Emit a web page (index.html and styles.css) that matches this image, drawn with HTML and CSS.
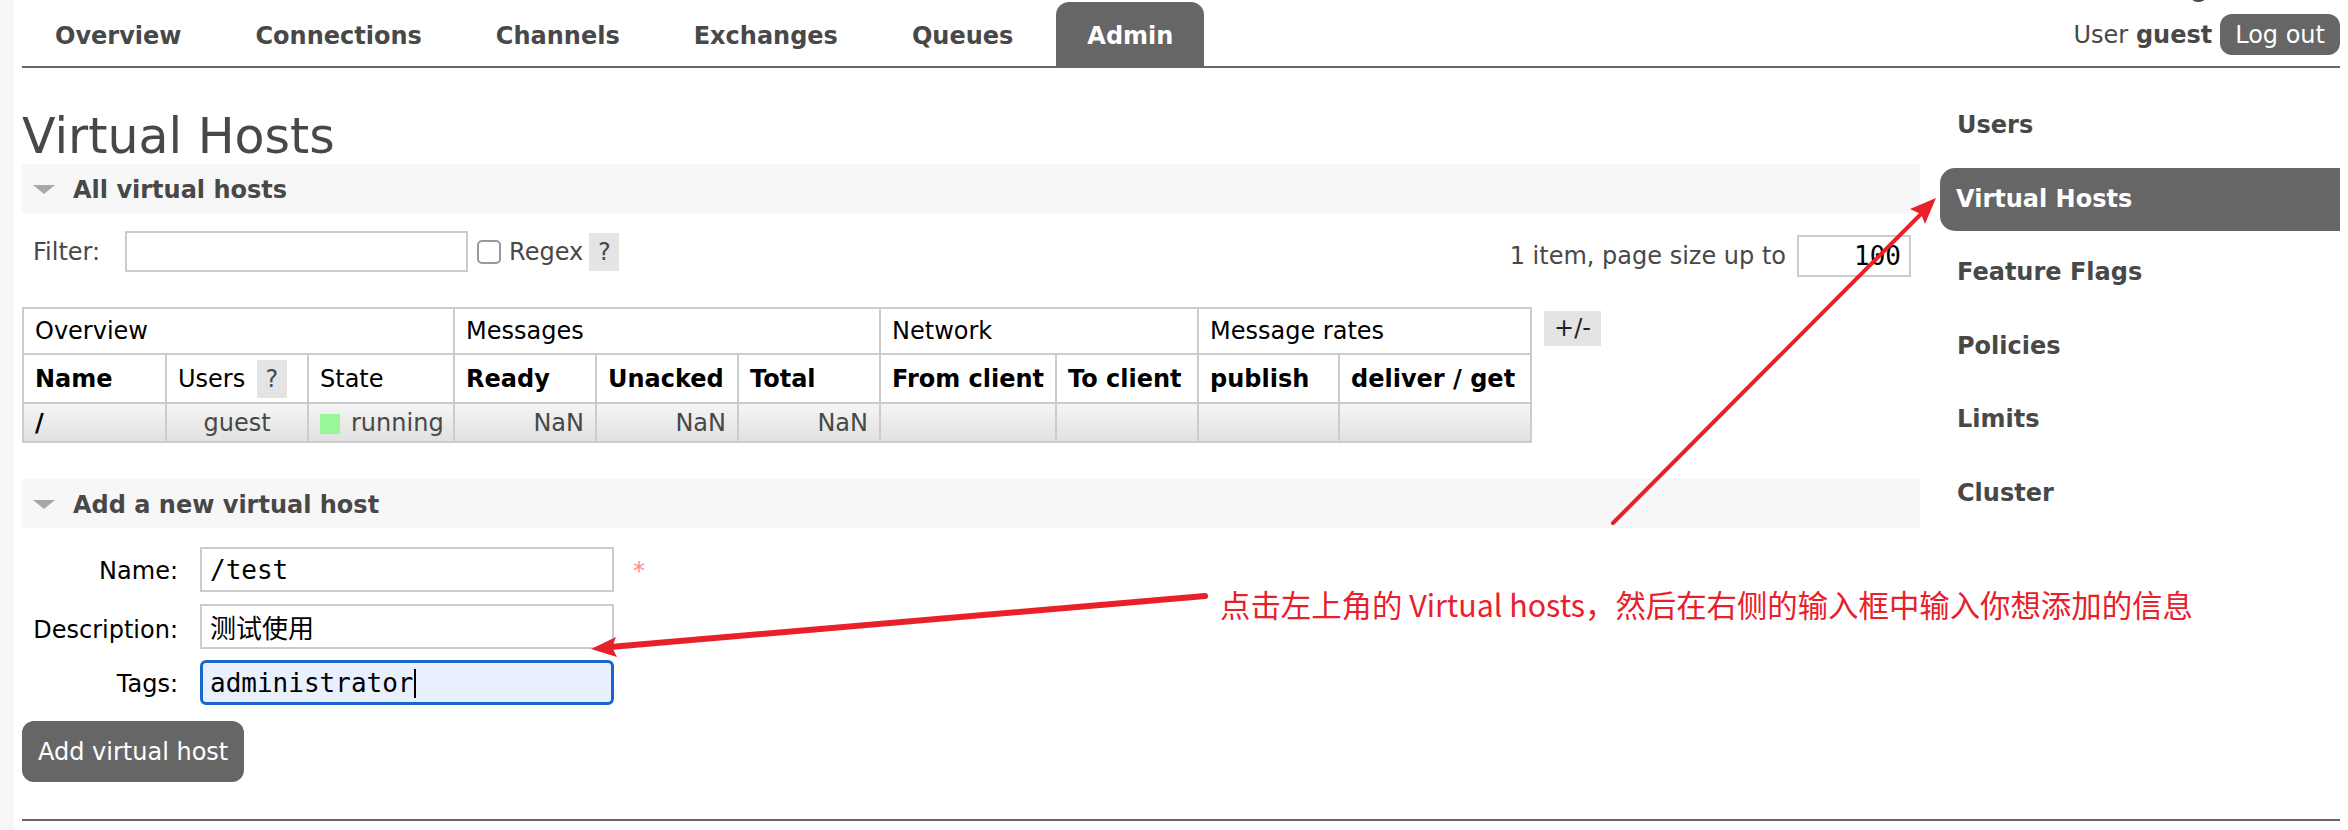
FILE: index.html
```html
<!DOCTYPE html>
<html lang="en">
<head>
<meta charset="utf-8">
<title>RabbitMQ Management: Virtual Hosts</title>
<link rel="stylesheet" href="styles.css">
</head>
<body>
<div class="page">
  <header class="header">
    <ul class="tabs">
      <li><a class="tab" href="#">Overview</a></li>
      <li><a class="tab" href="#">Connections</a></li>
      <li><a class="tab" href="#">Channels</a></li>
      <li><a class="tab" href="#">Exchanges</a></li>
      <li><a class="tab" href="#">Queues</a></li>
      <li><a class="tab active" href="#">Admin</a></li>
    </ul>
    <div class="login-wrap">
      <div class="cluster-line">Cluster <b>rabbit@localhost</b></div>
      <div class="login">
        <span>User <b>guest</b></span>
        <button class="logout" type="button">Log out</button>
      </div>
    </div>
  </header>

  <div class="layout">
    <main class="main">
      <h1 class="title">Virtual Hosts</h1>

      <section class="section">
        <h2 class="bar"><span class="tri"></span>All virtual hosts</h2>
        <div class="filter-row">
          <div class="filter-left">
            <label class="filter-label" for="filter">Filter:</label>
            <input class="text-input filter-input" id="filter" type="text">
            <input class="check" type="checkbox" id="regex">
            <label class="regex-label" for="regex">Regex</label>
            <span class="help">?</span>
          </div>
          <div class="filter-right">
            <span>1 item, page size up to</span>
            <input class="text-input page-size" type="text" value="100">
          </div>
        </div>

        <div class="tbl-wrap">
          <table class="list">
            <colgroup>
              <col class="w-name"><col class="w-users"><col class="w-state">
              <col class="w-num"><col class="w-num"><col class="w-num">
              <col class="w-from"><col class="w-num">
              <col class="w-pub"><col class="w-del">
            </colgroup>
            <thead>
              <tr class="r1">
                <th colspan="3">Overview</th>
                <th colspan="3">Messages</th>
                <th colspan="2">Network</th>
                <th colspan="2">Message rates</th>
              </tr>
              <tr class="r2">
                <th class="b">Name</th>
                <th>Users <span class="help">?</span></th>
                <th>State</th>
                <th class="b">Ready</th>
                <th class="b">Unacked</th>
                <th class="b">Total</th>
                <th class="b">From client</th>
                <th class="b">To client</th>
                <th class="b">publish</th>
                <th class="b">deliver / get</th>
              </tr>
            </thead>
            <tbody>
              <tr class="r3">
                <td class="vhost">/</td>
                <td class="c">guest</td>
                <td><span class="state-dot"></span>running</td>
                <td class="r">NaN</td>
                <td class="r">NaN</td>
                <td class="r">NaN</td>
                <td></td>
                <td></td>
                <td></td>
                <td></td>
              </tr>
            </tbody>
          </table>
          <span class="plusminus">+/-</span>
        </div>
      </section>

      <section class="section add">
        <h2 class="bar"><span class="tri"></span>Add a new virtual host</h2>
        <form class="form" onsubmit="return false">
          <label class="form-label" for="vh-name">Name:</label>
          <input class="text-input field" id="vh-name" type="text" value="/test">
          <span class="req">*</span>

          <label class="form-label" for="vh-desc">Description:</label>
          <input class="text-input field" id="vh-desc" type="text" value="测试使用">
          <span></span>

          <label class="form-label">Tags:</label>
          <div class="field focused" role="textbox">administrator<span class="caret"></span></div>
          <span></span>
        </form>
        <button class="btn" type="button">Add virtual host</button>
      </section>
    </main>

    <ul class="side">
      <li><a class="side-link" href="#">Users</a></li>
      <li><a class="side-link active" href="#">Virtual Hosts</a></li>
      <li><a class="side-link" href="#">Feature Flags</a></li>
      <li><a class="side-link" href="#">Policies</a></li>
      <li><a class="side-link" href="#">Limits</a></li>
      <li><a class="side-link" href="#">Cluster</a></li>
    </ul>
  </div>
  <div class="footer-line"></div>
</div>

<svg class="annot" width="2348" height="830" viewBox="0 0 2348 830" aria-hidden="true">
  <line x1="1613" y1="523" x2="1921" y2="214" stroke="#e8202a" stroke-width="4" stroke-linecap="round"/>
  <path d="M1936 198 L1925 224 L1921 214 L1910 209 Z" fill="#e8202a"/>
  <line x1="1205" y1="596" x2="610" y2="647" stroke="#e8202a" stroke-width="6" stroke-linecap="round"/>
  <path d="M591 649 L616 637 L612 647 L617 657 Z" fill="#e8202a"/>
</svg>
<div class="annot-text">点击左上角的 Virtual hosts，然后在右侧的输入框中输入你想添加的信息</div>
</body>
</html>
```
FILE: styles.css
```css
* { box-sizing: border-box; }

html, body {
  margin: 0;
  background: #fff;
}

body {
  border-left: 14px solid #f6f6f6;
  padding: 0 8px;
  min-height: 830px;
  font-family: "DejaVu Sans", Verdana, sans-serif;
  font-size: 24px;
  line-height: 28px;
  color: #484848;
}

/* ---------- header ---------- */
.header {
  display: flex;
  justify-content: space-between;
  align-items: flex-start;
  height: 68px;
  padding-top: 2px;
  border-bottom: 2px solid #666;
}

.tabs {
  display: flex;
  gap: 12px;
  list-style: none;
  margin: 0 0 0 2px;
  padding: 0;
}

.tab {
  display: block;
  height: 64px;
  padding: 20px 31px 0;
  font-weight: bold;
  color: #484848;
  text-decoration: none;
  border-radius: 13px 13px 0 0;
}

.tab.active {
  background: #666;
  color: #fff;
}

.login-wrap {
  display: flex;
  flex-direction: column;
  align-items: flex-end;
  margin-top: -26px;
}

.cluster-line {
  height: 28px;
  padding-right: 7px;
  white-space: nowrap;
}

.login {
  display: flex;
  align-items: center;
  gap: 8px;
  margin-top: 10px;
  white-space: nowrap;
}

.logout {
  height: 41px;
  padding: 1px 15px 0;
  border: 0;
  border-radius: 12px;
  background: #666;
  color: #fff;
  font: inherit;
  line-height: 40px;
}

/* ---------- layout ---------- */
.layout {
  display: flex;
  gap: 20px;
}

.main {
  width: 1898px;
  flex: none;
}

.title {
  margin: 41px 0 0;
  font-size: 49px;
  line-height: 55px;
  font-weight: normal;
  color: #484848;
}

.bar {
  display: flex;
  align-items: center;
  height: 49px;
  margin: 0;
  padding: 2px 0 0 11px;
  background: #f7f7f7;
  font-size: 24px;
  font-weight: bold;
  color: #484848;
}

.tri {
  width: 0;
  height: 0;
  margin-right: 18px;
  border-left: 11px solid transparent;
  border-right: 11px solid transparent;
  border-top: 9px solid #a8a8a8;
}

/* ---------- filter ---------- */
.filter-row {
  display: flex;
  justify-content: space-between;
  align-items: flex-start;
  margin-top: 18px;
  padding-left: 11px;
  padding-right: 9px;
}

.filter-left,
.filter-right {
  display: flex;
  align-items: center;
}

.filter-right {
  margin-top: 4px;
  gap: 11px;
}

.filter-label {
  margin-right: 25px;
}

.text-input {
  border: 2px solid #ccc;
  border-radius: 0;
  background: #fff;
  font-family: "DejaVu Sans Mono", "Noto Sans CJK SC", monospace;
  font-size: 26px;
  color: #000;
  outline: none;
}

.filter-input {
  width: 343px;
  height: 41px;
}

.check {
  appearance: none;
  width: 24px;
  height: 24px;
  margin: 0 8px 0 9px;
  border: 2px solid #999;
  border-radius: 5px;
  background: #fff;
}

.regex-label {
  margin-right: 6px;
}

.help {
  display: inline-block;
  width: 30px;
  height: 38px;
  line-height: 38px;
  text-align: center;
  background: #e4e4e4;
  color: #484848;
  font-weight: normal;
}

.page-size {
  width: 114px;
  height: 42px;
  padding: 0 8px;
  text-align: right;
}

/* ---------- table ---------- */
.tbl-wrap {
  display: flex;
  align-items: flex-start;
  gap: 12px;
  margin-top: 30px;
}

.list {
  border-collapse: collapse;
  table-layout: fixed;
  width: 1508px;
  flex: none;
}

.w-name { width: 143px; }
.w-users { width: 142px; }
.w-state { width: 146px; }
.w-num { width: 142px; }
.w-from { width: 176px; }
.w-pub { width: 141px; }
.w-del { width: 192px; }

.list th,
.list td {
  border: 2px solid #ccc;
  padding: 0 11px;
  text-align: left;
  white-space: nowrap;
  overflow: hidden;
  color: #000;
  font-weight: normal;
}

.list th.b { font-weight: bold; }

.list .r1 { height: 46px; }
.list .r2 { height: 49px; }
.list .r3 { height: 39px; }

.list .r2 .help {
  margin-left: 4px;
}

.list tbody td {
  background: linear-gradient(#f5f5f5, #e1e1e1);
  color: #484848;
}

.list td.vhost {
  color: #000;
  font-weight: bold;
}

.list td.c { text-align: center; }
.list td.r { text-align: right; }

.state-dot {
  display: inline-block;
  width: 20px;
  height: 20px;
  margin-right: 11px;
  vertical-align: -3px;
  background: #98f898;
}

.plusminus {
  display: inline-block;
  width: 57px;
  height: 35px;
  margin-top: 4px;
  line-height: 35px;
  text-align: center;
  background: #e4e4e4;
  color: #222;
}

/* ---------- add form ---------- */
.add {
  margin-top: 36px;
}

.form {
  display: grid;
  grid-template-columns: 156px 414px auto;
  column-gap: 22px;
  row-gap: 11.5px;
  align-items: baseline;
  margin-top: 19px;
}

.form-label {
  text-align: right;
  color: #000;
}

.field {
  width: 414px;
  height: 45px;
  padding: 0 8px;
}

.field.focused {
  display: flex;
  align-items: center;
  padding: 1px 7px 0;
  border: 3px solid #1a66d0;
  border-radius: 6px;
  background: #e8f0fe;
  font-family: "DejaVu Sans Mono", monospace;
  font-size: 26px;
  color: #000;
}

.caret {
  display: inline-block;
  width: 2px;
  height: 29px;
  background: #000;
}

.req {
  margin-left: -3px;
  color: #f88;
}

.btn {
  display: block;
  margin-top: 16px;
  padding: 17px 16px 16px;
  border: 0;
  border-radius: 12px;
  background: #666;
  color: #fff;
  font: inherit;
}

/* ---------- side menu ---------- */
.side {
  flex: 1;
  display: flex;
  flex-direction: column;
  gap: 10.5px;
  list-style: none;
  margin: 26px 0 0;
  padding: 0;
}

.side-link {
  display: block;
  height: 63px;
  padding: 17px 0 0 17px;
  font-weight: bold;
  color: #484848;
  text-decoration: none;
  border-radius: 15px 0 0 15px;
}

.side-link.active {
  background: #666;
  color: #fff;
  padding-left: 16px;
}

.footer-line {
  margin-top: 37px;
  border-top: 2px solid #666;
}

/* ---------- annotation overlay ---------- */
.annot {
  position: absolute;
  left: 0;
  top: 0;
  pointer-events: none;
}

.annot-text {
  position: absolute;
  left: 1220px;
  top: 589px;
  font-family: "Noto Sans CJK SC", sans-serif;
  font-size: 30.4px;
  line-height: 30px;
  color: #e8202a;
  white-space: nowrap;
}
```
